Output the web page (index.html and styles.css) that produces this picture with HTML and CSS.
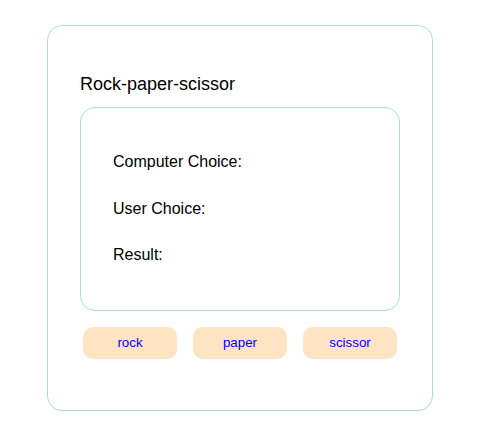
FILE: index.html
```html
<!DOCTYPE html>
<html>
<head>
<meta charset="utf-8">
<link rel="stylesheet" href="styles.css">
</head>
<body>
<div class="game">
  <h3 class="title">Rock-paper-scissor</h3>
  <div class="board">
    <p class="line">Computer Choice:</p>
    <p class="line">User Choice:</p>
    <p class="line">Result:</p>
  </div>
  <div class="buttons">
    <button class="btn">rock</button>
    <button class="btn">paper</button>
    <button class="btn">scissor</button>
  </div>
</div>
</body>
</html>
```
FILE: styles.css
```css
html, body {
  margin: 0;
  padding: 0;
  background: #fff;
}
body {
  font-family: "Liberation Sans", Arial, sans-serif;
  color: #000;
}
.game {
  box-sizing: border-box;
  width: 386px;
  height: 386px;
  margin: 25px 0 0 47px;
  border: 1px solid #add8e6;
  border-radius: 15px;
  padding: 0 32px;
}
.title {
  margin: 48px 0 0 0;
  font-size: 18px;
  font-weight: normal;
  line-height: 21px;
}
.board {
  box-sizing: border-box;
  margin-top: 12px;
  width: 320px;
  height: 204px;
  border: 1px solid #add8e6;
  border-radius: 15px;
  padding: 45px 32px 0 32px;
}
.line {
  margin: 0 0 28.5px 0;
  font-size: 16px;
  line-height: 18px;
}
.buttons {
  display: flex;
  gap: 16px;
  margin-top: 16px;
  padding-left: 3px;
}
.btn {
  box-sizing: border-box;
  width: 94px;
  height: 32px;
  border: none;
  border-radius: 10px;
  background: #ffe4c4;
  color: #0000ff;
  font-family: "Liberation Sans", Arial, sans-serif;
  font-size: 13.33px;
  line-height: 15px;
  padding: 0 0 2px 0;
}
```
